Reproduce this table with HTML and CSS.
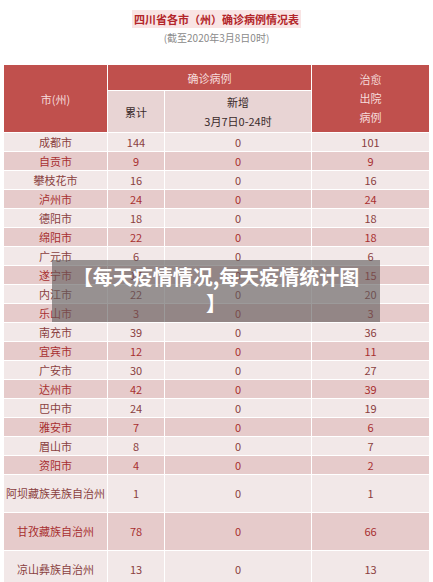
FILE: index.html
```html
<!DOCTYPE html>
<html lang="zh-CN">
<head>
<meta charset="utf-8">
<title>四川省各市（州）确诊病例情况表</title>
<link rel="stylesheet" href="styles.css">
</head>
<body>
<div class="page">
  <div class="heading">
    <h1 class="title">四川省各市（州）确诊病例情况表</h1>
    <p class="subtitle">(截至2020年3月8日0时)</p>
  </div>
  <table class="data">
    <colgroup>
      <col class="c1"><col class="c2"><col class="c3"><col class="c4">
    </colgroup>
    <thead>
      <tr class="h1">
        <th rowspan="2" class="hred">市(州)</th>
        <th colspan="2" class="hred">确诊病例</th>
        <th rowspan="2" class="hred multi">治愈<br>出院<br>病例</th>
      </tr>
      <tr class="h2">
        <th class="hpink">累计</th>
        <th class="hpink multi2">新增<br>3月7日0-24时</th>
      </tr>
    </thead>
    <tbody>
      <tr class="light"><td>成都市</td><td>144</td><td>0</td><td>101</td></tr>
      <tr class="dark"><td>自贡市</td><td>9</td><td>0</td><td>9</td></tr>
      <tr class="light"><td>攀枝花市</td><td>16</td><td>0</td><td>16</td></tr>
      <tr class="dark"><td>泸州市</td><td>24</td><td>0</td><td>24</td></tr>
      <tr class="light"><td>德阳市</td><td>18</td><td>0</td><td>18</td></tr>
      <tr class="dark"><td>绵阳市</td><td>22</td><td>0</td><td>18</td></tr>
      <tr class="light"><td>广元市</td><td>6</td><td>0</td><td>6</td></tr>
      <tr class="dark"><td>遂宁市</td><td>17</td><td>0</td><td>15</td></tr>
      <tr class="light"><td>内江市</td><td>22</td><td>0</td><td>20</td></tr>
      <tr class="dark"><td>乐山市</td><td>3</td><td>0</td><td>3</td></tr>
      <tr class="light"><td>南充市</td><td>39</td><td>0</td><td>36</td></tr>
      <tr class="dark"><td>宜宾市</td><td>12</td><td>0</td><td>11</td></tr>
      <tr class="light"><td>广安市</td><td>30</td><td>0</td><td>27</td></tr>
      <tr class="dark"><td>达州市</td><td>42</td><td>0</td><td>39</td></tr>
      <tr class="light"><td>巴中市</td><td>24</td><td>0</td><td>19</td></tr>
      <tr class="dark"><td>雅安市</td><td>7</td><td>0</td><td>6</td></tr>
      <tr class="light"><td>眉山市</td><td>8</td><td>0</td><td>7</td></tr>
      <tr class="dark"><td>资阳市</td><td>4</td><td>0</td><td>2</td></tr>
      <tr class="light tall"><td>阿坝藏族羌族自治州</td><td>1</td><td>0</td><td>1</td></tr>
      <tr class="dark tall"><td>甘孜藏族自治州</td><td>78</td><td>0</td><td>66</td></tr>
      <tr class="light tall"><td>凉山彝族自治州</td><td>13</td><td>0</td><td>13</td></tr>
    </tbody>
  </table>
  <div class="banner">【每天疫情情况,每天疫情统计图】</div>
</div>
</body>
</html>
```

FILE: styles.css
```css
html, body {
  margin: 0;
  padding: 0;
  background: #ffffff;
}
body {
  font-family: "Noto Sans CJK SC", "Noto Sans", sans-serif;
  overflow: hidden;
}
.page {
  position: relative;
  width: 433px;
  height: 582px;
  overflow: hidden;
}
.heading {
  display: flex;
  flex-direction: column;
  align-items: center;
  padding-top: 10px;
  height: 64px;
  box-sizing: border-box;
}
.title {
  margin: 0;
  font-size: 11px;
  line-height: 18px;
  font-weight: 700;
  color: #b3262a;
  background: #f9e4e4;
  padding: 0 2px;
}
.subtitle {
  margin: 1px 0 0;
  font-size: 10px;
  line-height: 18px;
  color: #8a8a8a;
}
.data {
  margin-left: 3px;
  width: 426px;
  table-layout: fixed;
  border-collapse: collapse;
  font-size: 11px;
}
.c1 { width: 104px; }
.c2 { width: 57px; }
.c3 { width: 147px; }
.c4 { width: 118px; }
.data th, .data td {
  padding: 0;
  text-align: center;
  border: 1px solid #ffffff;
  font-weight: 400;
}
.h1 { height: 26px; }
.h2 { height: 42px; }
.hred {
  background: #c0504d;
  color: #f6dcdc;
}
.hpink {
  background: #e8d4d4;
  color: #3a2a2a;
}
.multi {
  line-height: 19px;
  padding-top: 2px;
}
.multi2 {
  line-height: 19px;
}
tbody tr { height: 19px; }
tbody tr.tall { height: 38px; }
.light td {
  background: #f2e8e8;
  color: #8a4040;
}
.dark td {
  background: #e6cbcb;
  color: #a82f30;
}
.data td {
  line-height: 17px;
  white-space: nowrap;
}
.banner {
  position: absolute;
  left: 52px;
  top: 260px;
  width: 328px;
  box-sizing: border-box;
  padding: 4px 20px 6px;
  background: rgba(95, 92, 92, 0.62);
  color: #ffffff;
  font-size: 20px;
  line-height: 26px;
  font-weight: 700;
  text-align: center;
  line-break: anywhere;
}
```
